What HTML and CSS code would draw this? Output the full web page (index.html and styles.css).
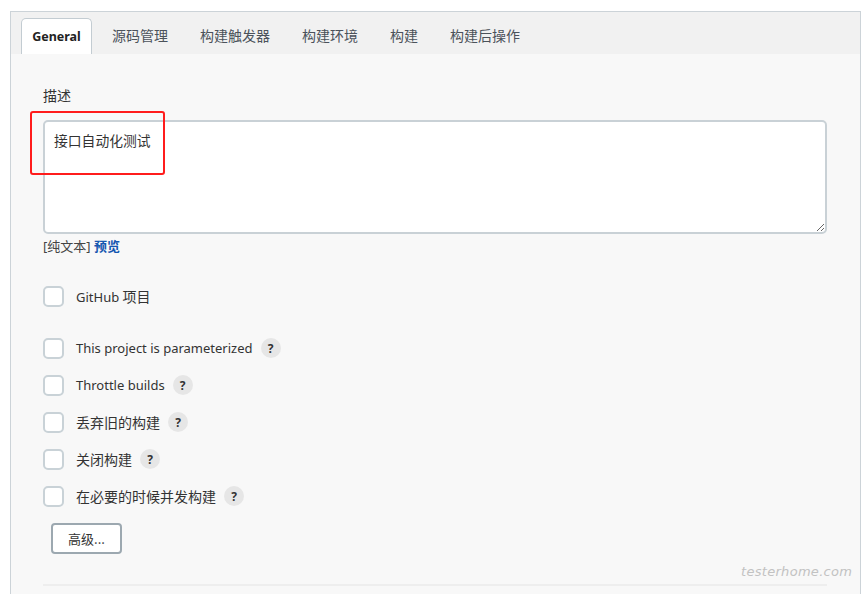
FILE: index.html
```html
<!DOCTYPE html>
<html lang="zh-CN">
<head>
<meta charset="utf-8">
<title>General</title>
<link rel="stylesheet" href="styles.css">
</head>
<body>
<div class="panel">
  <div class="tabbar">
    <div class="tab active">General</div>
    <div class="tab">源码管理</div>
    <div class="tab">构建触发器</div>
    <div class="tab">构建环境</div>
    <div class="tab">构建</div>
    <div class="tab">构建后操作</div>
  </div>
  <div class="content">
    <div class="label">描述</div>
    <div class="area-wrap">
      <textarea class="desc">接口自动化测试</textarea>
      <div class="highlight"></div>
    </div>
    <div class="fmt">[纯文本] <span class="preview">预览</span></div>
    <div class="opt github"><span class="box"></span><span class="txt">GitHub <span class="cjk">项目</span></span></div>
    <div class="opts">
      <div class="opt"><span class="box"></span><span class="txt">This project is parameterized</span><span class="help">?</span></div>
      <div class="opt"><span class="box"></span><span class="txt">Throttle builds</span><span class="help">?</span></div>
      <div class="opt"><span class="box"></span><span class="txt cjk">丢弃旧的构建</span><span class="help">?</span></div>
      <div class="opt"><span class="box"></span><span class="txt cjk">关闭构建</span><span class="help">?</span></div>
      <div class="opt"><span class="box"></span><span class="txt cjk">在必要的时候并发构建</span><span class="help">?</span></div>
    </div>
    <div class="btn-row"><button class="adv">高级...</button></div>
    <div class="sep"></div>
  </div>
</div>
<div class="watermark">testerhome.com</div>
</body>
</html>
```
FILE: styles.css
```css
html, body {
  margin: 0;
  padding: 0;
  background: #ffffff;
  overflow: hidden;
}
body {
  font-family: "Noto Sans", "Noto Sans CJK SC", sans-serif;
  color: #333;
  padding: 11px 2px 0 10px;
  height: 594px;
  box-sizing: border-box;
}
.panel {
  border: 1px solid #ccd3d8;
  border-bottom: none;
  background: #f8f8f8;
  height: 600px;
}
.tabbar {
  background: #f1f1f1;
  display: flex;
  gap: 8px;
  padding: 6px 0 0 10px;
  height: 36px;
}
.tab {
  padding: 0 12px;
  height: 36px;
  line-height: 36px;
  font-size: 14px;
  color: #4b525a;
  box-sizing: border-box;
}
.tab.active {
  background: #ffffff;
  border: 1px solid #c3ccd2;
  border-bottom: none;
  border-radius: 5px 5px 0 0;
  color: #222;
  font-weight: 700;
  font-size: 12.5px;
  width: 71px;
  padding: 0;
  text-align: center;
  line-height: 36px;
}
.content {
  padding: 32px 33px 0 32px;
}
.label {
  font-size: 14px;
  line-height: 20px;
  color: #333;
}
.area-wrap {
  position: relative;
  margin-top: 14px;
}
.desc {
  display: block;
  width: 100%;
  height: 114px;
  box-sizing: border-box;
  border: 2px solid #c9d1d6;
  border-radius: 5px;
  background: #fff;
  padding: 8px 9px;
  font-family: "Noto Sans CJK SC", sans-serif;
  font-size: 13.8px;
  line-height: 20px;
  color: #333;
  resize: vertical;
  margin: 0;
}
.highlight {
  position: absolute;
  left: -13px;
  top: -9px;
  width: 135px;
  height: 64px;
  box-sizing: border-box;
  border: 2px solid #ff1c1c;
  border-radius: 3px;
}
.fmt {
  font-size: 13px;
  line-height: 22px;
  color: #444;
  margin-top: 1px;
}
.preview {
  color: #1557b0;
  font-weight: 700;
}
.opt {
  display: flex;
  align-items: center;
  height: 22px;
}
.github {
  margin-top: 28px;
}
.opts {
  display: flex;
  flex-direction: column;
  gap: 15px;
  margin-top: 30px;
}
.box {
  width: 21px;
  height: 21px;
  box-sizing: border-box;
  border: 2px solid #c9d2d7;
  border-radius: 5px;
  background: #fff;
  flex: none;
}
.txt {
  margin-left: 12px;
  font-size: 13px;
  color: #333;
}
.cjk {
  font-size: 14px;
}
.help {
  margin-left: 8px;
  width: 20px;
  height: 20px;
  border-radius: 50%;
  background: #e6e6e6;
  color: #333;
  font-size: 12px;
  font-weight: 700;
  display: flex;
  align-items: center;
  justify-content: center;
}
.btn-row {
  margin-top: 16px;
  padding-left: 8px;
}
.adv {
  width: 71px;
  height: 31px;
  box-sizing: border-box;
  border: 2px solid #9ca8b0;
  border-radius: 4px;
  background: #fff;
  font-family: "Noto Sans CJK SC", sans-serif;
  font-size: 13px;
  color: #333;
  padding: 0;
}
.sep {
  margin-top: 30px;
  height: 2px;
  background: #eeeeee;
}
.watermark {
  position: absolute;
  left: 741px;
  top: 564px;
  font-family: "DejaVu Sans", sans-serif;
  font-style: italic;
  font-weight: 200;
  font-size: 13px;
  color: #c2c2c2;
  letter-spacing: 0.3px;
}
```
